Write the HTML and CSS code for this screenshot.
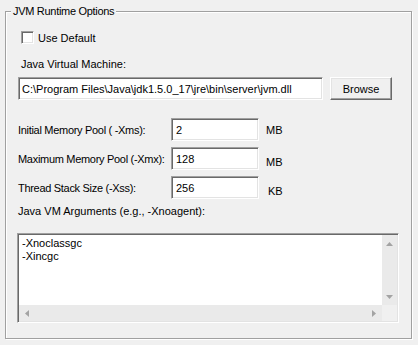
FILE: index.html
```html
<!DOCTYPE html>
<html>
<head>
<meta charset="utf-8">
<title>JVM Runtime Options</title>
<link rel="stylesheet" href="styles.css">
</head>
<body>
<fieldset class="group">
  <legend class="group-title">JVM Runtime Options</legend>
  <label class="check-row"><span class="checkbox"></span><span class="check-text">Use Default</span></label>
  <div class="caption caption-jvm">Java Virtual Machine:</div>
  <div class="jvm-row">
    <input class="field field-jvm" type="text" value="C:\Program Files\Java\jdk1.5.0_17\jre\bin\server\jvm.dll">
    <button class="btn" type="button">Browse</button>
  </div>
  <div class="mem-row mem-row-first">
    <span class="mem-label">Initial Memory Pool ( -Xms):</span>
    <input class="field field-mem" type="text" value="2">
    <span class="unit">MB</span>
  </div>
  <div class="mem-row">
    <span class="mem-label">Maximum Memory Pool (-Xmx):</span>
    <input class="field field-mem" type="text" value="128">
    <span class="unit unit-low">MB</span>
  </div>
  <div class="mem-row">
    <span class="mem-label">Thread Stack Size (-Xss):</span>
    <input class="field field-mem" type="text" value="256">
    <span class="unit unit-low unit-kb">KB</span>
  </div>
  <div class="caption caption-args">Java VM Arguments (e.g., -Xnoagent):</div>
  <div class="args">
    <div class="args-text">-Xnoclassgc<br>-Xincgc</div>
    <div class="vscroll">
      <svg class="arrow" width="7" height="4" viewBox="0 0 7 4"><path d="M0 4 L3.5 0 L7 4 Z"/></svg>
      <svg class="arrow" width="7" height="4" viewBox="0 0 7 4"><path d="M0 0 L3.5 4 L7 0 Z"/></svg>
    </div>
    <div class="hscroll">
      <svg class="arrow" width="4" height="7" viewBox="0 0 4 7"><path d="M4 0 L0 3.5 L4 7 Z"/></svg>
      <svg class="arrow" width="4" height="7" viewBox="0 0 4 7"><path d="M0 0 L4 3.5 L0 7 Z"/></svg>
    </div>
    <div class="corner"></div>
  </div>
</fieldset>
</body>
</html>
```

FILE: styles.css
```css
* {
  box-sizing: border-box;
}

html,
body {
  margin: 0;
  background: #f0f0f0;
}

body {
  width: 418px;
  height: 345px;
  overflow: hidden;
  padding: 4px 0 0 5px;
  font: 11px/14px "Liberation Sans", Arial, sans-serif;
  color: #000;
}

.group {
  margin: 0;
  padding: 0 0 15px 0;
  width: 407px;
  min-width: 0;
  border: 1px solid #a0a0a0;
  box-shadow: inset 1px 1px 0 #fff, 1px 1px 0 #fff;
}

.group-title {
  margin-left: 5px;
  padding: 0 2px;
  line-height: 14px;
  letter-spacing: -0.3px;
  background: #f0f0f0;
}

.check-row {
  display: flex;
  align-items: center;
  gap: 4px;
  height: 13px;
  margin: 13px 0 0 15px;
}

.checkbox {
  width: 13px;
  height: 13px;
  background: #fff;
  border: 1px solid;
  border-color: #a0a0a0 #fff #fff #a0a0a0;
  box-shadow: inset 1px 1px 0 #696969, inset -1px -1px 0 #e3e3e3;
}

.caption {
  line-height: 14px;
}

.caption-jvm {
  margin: 13px 0 0 15px;
}

.jvm-row {
  display: flex;
  align-items: flex-start;
  margin: 6px 0 0 12px;
}

.field {
  margin: 0;
  height: 23px;
  background: #fff;
  border: 1px solid;
  border-color: #a0a0a0 #fff #fff #a0a0a0;
  box-shadow: inset 1px 1px 0 #696969, inset -1px -1px 0 #e3e3e3;
  font: 11px "Liberation Sans", Arial, sans-serif;
  color: #000;
  outline: none;
}

.field-jvm {
  width: 305px;
  padding: 0 0 0 3px;
}

.btn {
  margin: 0 0 0 7px;
  width: 62px;
  height: 23px;
  padding: 0;
  background: #f0f0f0;
  border: 1px solid;
  border-color: #fff #696969 #696969 #fff;
  box-shadow: inset -1px -1px 0 #a0a0a0, inset 1px 1px 0 #e3e3e3;
  font: 11px "Liberation Sans", Arial, sans-serif;
  color: #000;
}

.mem-row {
  display: flex;
  align-items: center;
  height: 23px;
  margin: 6px 0 0 12px;
}

.mem-row-first {
  margin-top: 18px;
}

.mem-label {
  flex: none;
  width: 153px;
  white-space: nowrap;
  letter-spacing: -0.3px;
}

.field-mem {
  flex: none;
  width: 88px;
  padding: 0 0 0 4px;
}

.unit {
  margin-left: 7px;
}

.unit-low {
  margin-top: 6px;
}

.unit-kb {
  margin-left: 9px;
}

.caption-args {
  margin: 5px 0 0 12px;
}

.args {
  display: grid;
  grid-template-columns: 1fr 15px;
  grid-template-rows: 1fr 16px;
  width: 382px;
  height: 90px;
  margin: 15px 0 0 11px;
  padding: 1px;
  background: #fff;
  border: 1px solid;
  border-color: #a0a0a0 #fff #fff #a0a0a0;
  box-shadow: inset 1px 1px 0 #696969, inset -1px -1px 0 #e3e3e3;
}

.args-text {
  padding: 2px 0 0 3px;
  line-height: 13px;
}

.vscroll {
  display: flex;
  flex-direction: column;
  justify-content: space-between;
  align-items: center;
  padding: 7px 0 6px 0;
  background: #eaeaea;
}

.hscroll {
  display: flex;
  justify-content: space-between;
  align-items: center;
  padding: 0 6px;
  background: #eaeaea;
}

.corner {
  background: #f0f0f0;
}

.arrow {
  display: block;
  fill: #a3a3a3;
}
```
